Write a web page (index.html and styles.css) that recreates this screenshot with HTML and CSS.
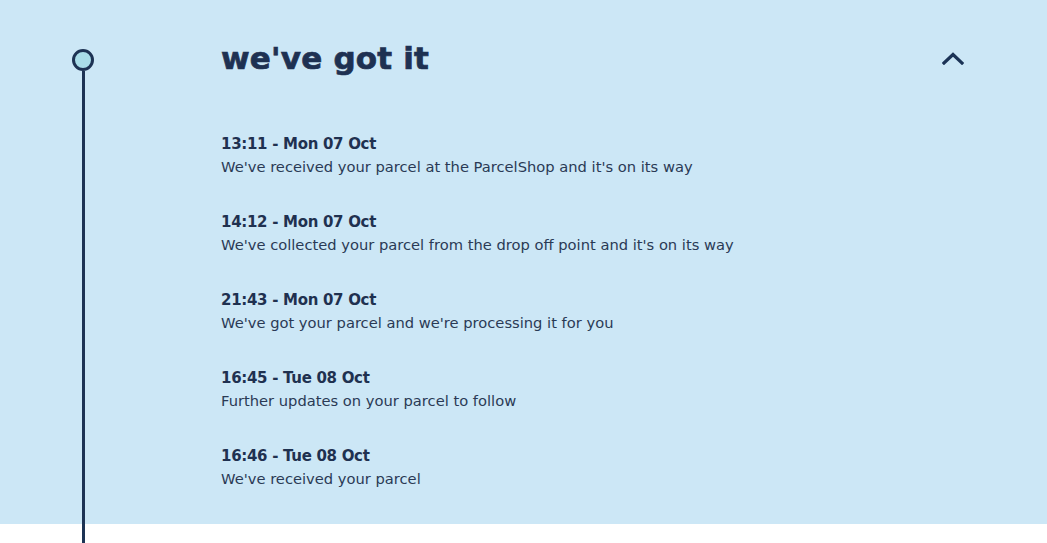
FILE: index.html
```html
<!DOCTYPE html>
<html lang="en">
<head>
<meta charset="utf-8">
<title>Parcel tracking</title>
<link rel="stylesheet" href="styles.css">
</head>
<body>
<section class="tracker">
  <div class="rail"><span class="dot"></span><span class="line"></span></div>
  <div class="content">
    <header class="head">
      <h2 class="title">we've got it</h2>
      <button class="toggle" aria-label="Collapse">
        <svg width="22" height="14" viewBox="0 0 22 14"><polyline points="2,12 11,3.5 20,12" fill="none" stroke="#1b3356" stroke-width="3.2" stroke-linecap="square" stroke-linejoin="miter"/></svg>
      </button>
    </header>
    <ul class="events">
      <li class="event"><p class="time">13:11 - Mon 07 Oct</p><p class="desc">We've received your parcel at the ParcelShop and it's on its way</p></li>
      <li class="event"><p class="time">14:12 - Mon 07 Oct</p><p class="desc">We've collected your parcel from the drop off point and it's on its way</p></li>
      <li class="event"><p class="time">21:43 - Mon 07 Oct</p><p class="desc">We've got your parcel and we're processing it for you</p></li>
      <li class="event"><p class="time">16:45 - Tue 08 Oct</p><p class="desc">Further updates on your parcel to follow</p></li>
      <li class="event"><p class="time">16:46 - Tue 08 Oct</p><p class="desc">We've received your parcel</p></li>
    </ul>
  </div>
</section>
<div class="after"><span class="line"></span></div>
</body>
</html>
```
FILE: styles.css
```css
html, body {
  margin: 0;
  padding: 0;
  background: #ffffff;
}
body {
  font-family: "DejaVu Sans", "Noto Sans", sans-serif;
  color: #1f3150;
}
.tracker {
  display: flex;
  height: 524px;
  box-sizing: border-box;
  padding-left: 72px;
  background: #cce7f6;
}
.rail {
  width: 22px;
  display: flex;
  flex-direction: column;
  align-items: center;
  padding-top: 49px;
}
.dot {
  width: 22px;
  height: 22px;
  box-sizing: border-box;
  border: 3px solid #1d3354;
  border-radius: 50%;
  background: #a9dde9;
  flex: none;
}
.line {
  display: block;
  width: 3px;
  flex: 1;
  background: #1d3354;
}
.content {
  flex: 1;
  margin-left: 127px;
  padding-right: 83px;
  padding-top: 38px;
}
.head {
  display: flex;
  align-items: center;
  justify-content: space-between;
  height: 40px;
}
.title {
  margin: 0;
  font-size: 31px;
  line-height: 40px;
  font-weight: 800;
  letter-spacing: 0.2px;
  color: #1e3152;
  -webkit-text-stroke: 0.7px #1e3152;
}
.toggle {
  border: 0;
  background: none;
  padding: 0;
  width: 22px;
  height: 14px;
  display: flex;
  cursor: pointer;
}
.events {
  list-style: none;
  margin: 55px 0 0;
  padding: 0;
  display: flex;
  flex-direction: column;
  gap: 32px;
}
.time {
  margin: 0;
  font-size: 15px;
  line-height: 22px;
  font-weight: 700;
  letter-spacing: -0.3px;
  color: #1f3150;
}
.desc {
  margin: 0;
  font-size: 14.7px;
  line-height: 24px;
  color: #2a3a55;
}
.after {
  height: 19px;
  padding-left: 82px;
  display: flex;
}
.after .line {
  flex: none;
  height: 100%;
}
```
